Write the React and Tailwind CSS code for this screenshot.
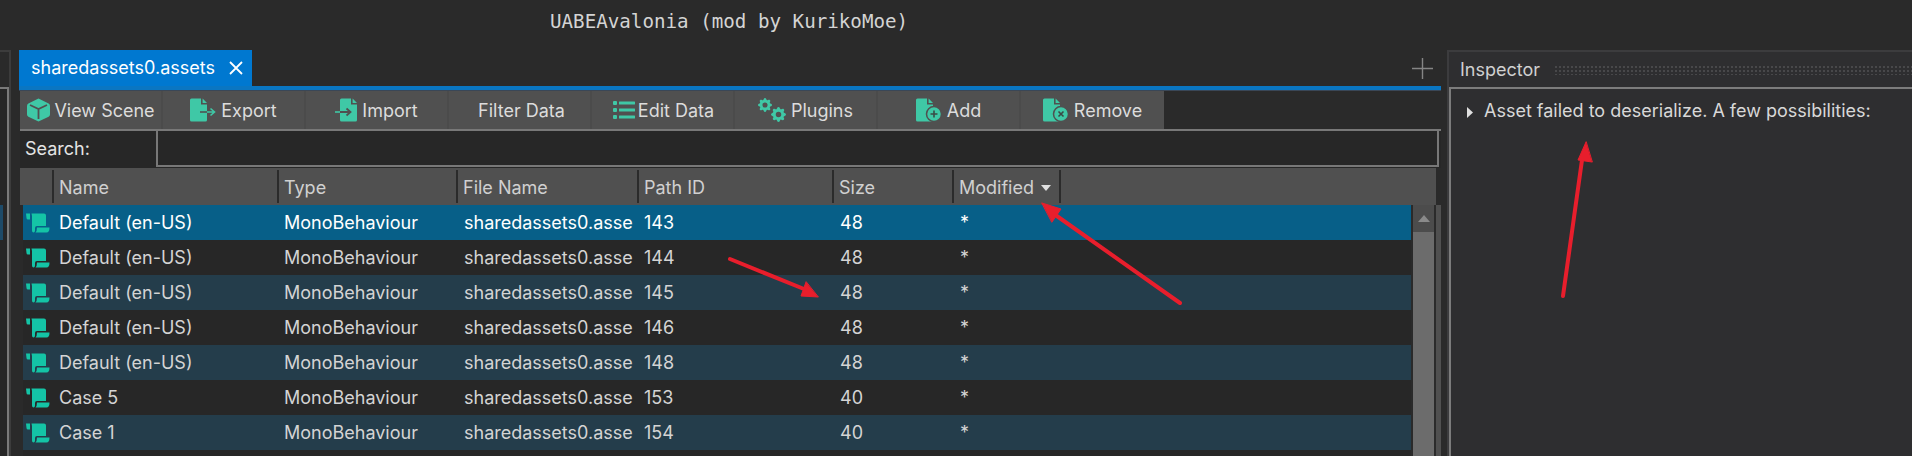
import React from "react";
import { BsGearFill } from "react-icons/bs";

const inter = "font-['Inter','Noto_Sans',sans-serif]";

const CubeIcon = () => (
  <svg width="25" height="24" viewBox="0 0 25 24">
    <path d="M12.5 0.5 22.6 5.6Q24 6.3 24 8V16.5Q24 18 22.6 18.7L12.5 23.5 2.4 18.7Q1 18 1 16.5V8Q1 6.3 2.4 5.6Z" fill="#3fc8a6" />
    <path d="M4 7 12.5 11 21 7M12.5 11V21" fill="none" stroke="#505050" strokeWidth="1.8" />
  </svg>
);

const FileShape = ({ children }) => (
  <svg width="28" height="24" viewBox="0 0 28 24">
    <path d="M1.5 0.5H11V6.5H17V22Q17 23.5 15.5 23.5H1.5Q0 23.5 0 22V2Q0 0.5 1.5 0.5ZM12.6 0.5 17 5H12.6Z" fill="#3fc8a6" />
    {children}
  </svg>
);

const ExportIcon = () => (
  <FileShape>
    <path d="M10 14H24M20.5 10.5 24.5 14 20.5 17.5" fill="none" stroke="#3fc8a6" strokeWidth="1.6" />
    <path d="M10 14H17" stroke="#505050" strokeWidth="1.6" />
  </FileShape>
);

const ImportIcon = () => (
  <svg width="24" height="24" viewBox="0 0 24 24">
    <path d="M6.5 0.5H16V6.5H22V22Q22 23.5 20.5 23.5H6.5Q5 23.5 5 22V2Q5 0.5 6.5 0.5ZM17.6 0.5 22 5H17.6Z" fill="#3fc8a6" />
    <path d="M0 14H5" stroke="#3fc8a6" strokeWidth="1.6" />
    <path d="M5 14H15M11.5 10.5 15.5 14 11.5 17.5" fill="none" stroke="#505050" strokeWidth="1.8" />
  </svg>
);

const ListIcon = () => (
  <svg width="22" height="20" viewBox="0 0 22 20" fill="#3fc8a6">
    <rect x="0" y="1" width="4" height="4" rx="1" />
    <rect x="0" y="8" width="4" height="4" rx="1" />
    <rect x="0" y="15" width="4" height="4" rx="1" />
    <rect x="6" y="1.5" width="16" height="3" rx="0.5" />
    <rect x="6" y="8.5" width="16" height="3" rx="0.5" />
    <rect x="6" y="15.5" width="16" height="3" rx="0.5" />
  </svg>
);

const GearsIcon = () => (
  <span className="relative mr-[2px] block h-[24px] w-[28px] text-[#3fc8a6]">
    <BsGearFill className="absolute left-0 top-0 text-[14px]" />
    <BsGearFill className="absolute bottom-0 right-0 text-[15px]" />
  </span>
);

const BadgeFileIcon = ({ kind }) => (
  <FileShape>
    <circle cx="18" cy="16" r="7.5" fill="#3fc8a6" stroke="#505050" strokeWidth="1.5" />
    {kind === "add" ? (
      <path d="M14.5 16H21.5M18 12.5V19.5" stroke="#3a4a46" strokeWidth="1.6" />
    ) : (
      <path d="M15.5 13.5 20.5 18.5M20.5 13.5 15.5 18.5" stroke="#3a4a46" strokeWidth="1.6" />
    )}
  </FileShape>
);

const ScrollIcon = () => (
  <svg width="24" height="20" viewBox="0 0 24 20" className="block">
    <path d="M0 0.5H4V6.5H2Q0.5 6.5 0.5 5Z" fill="#14c4a6" />
    <path d="M5.5 0.5H18Q20 0.5 20 2.5V13H11Q9 13 9 15V17.5Q9 19.5 7.5 19.5T6 17.5V3Z" fill="#14c4a6" />
    <path d="M11 14.5H23.5Q23.5 19.5 20.5 19.5H9.5Q11 18 11 14.5Z" fill="#14c4a6" />
  </svg>
);

const tools = [
  { label: "View Scene", icon: <CubeIcon /> },
  { label: "Export", icon: <ExportIcon /> },
  { label: "Import", icon: <ImportIcon /> },
  { label: "Filter Data", nudge: "pl-[4px]" },
  { label: "Edit Data", icon: <ListIcon />, nudge: "pl-[2px]" },
  { label: "Plugins", icon: <GearsIcon /> },
  { label: "Add", icon: <BadgeFileIcon kind="add" /> },
  { label: "Remove", icon: <BadgeFileIcon kind="remove" /> },
];

const rows = [
  ["Default (en-US)", "143", "48"],
  ["Default (en-US)", "144", "48"],
  ["Default (en-US)", "145", "48"],
  ["Default (en-US)", "146", "48"],
  ["Default (en-US)", "148", "48"],
  ["Case 5", "153", "40"],
  ["Case 1", "154", "40"],
];

const headers = ["", "Name", "Type", "File Name", "Path ID", "Size", "Modified", ""];

const App = () => {
  return (
    <div className={`relative flex h-[456px] w-[1912px] flex-col overflow-hidden bg-[#2a2a2a] text-[18px] text-[#d8d8d8] ${inter}`}>
      <div className="flex h-[50px] shrink-0 items-center pl-[550px]">
        <span className="pb-[6px] font-['DejaVu_Sans_Mono',monospace] text-[19.2px] text-[#d4d4d4]">
          UABEAvalonia (mod by KurikoMoe)
        </span>
      </div>

      <div className="flex min-h-0 flex-1">
        {/* left dock sliver */}
        <div className="mr-[8px] flex w-[11px] shrink-0 flex-col border-t-2 border-r-2 border-[#3c3c3c]">
          <div className="h-[35px] shrink-0" />
          <div className="flex-1 border-t-2 border-r-2 border-[#7a7a7a] bg-[#262626]">
            <div className="mt-[116px] h-[35px] w-[3px] bg-[#1d4a68]" />
          </div>
        </div>

        {/* documents */}
        <div className="flex w-[1422px] shrink-0 flex-col">
          <div className="flex h-[36px] shrink-0 items-start">
            <div className="flex h-[36px] w-[233px] items-center gap-[14px] bg-[#0078d0] pb-[2px] pl-[12px] text-white">
              <span>sharedassets0.assets</span>
              <svg width="14" height="14" viewBox="0 0 14 14" className="mt-[2px]">
                <path d="M1 1 13 13M13 1 1 13" stroke="#fff" strokeWidth="1.8" />
              </svg>
            </div>
            <div className="ml-auto mr-[8px] mt-[8px]">
              <svg width="21" height="21" viewBox="0 0 21 21">
                <path d="M10.5 0V21M0 10.5H21" stroke="#858585" strokeWidth="1.4" />
              </svg>
            </div>
          </div>
          <div className="h-[4px] shrink-0 bg-[#0a76c2]" />
          <div className="h-[1px] shrink-0 bg-[#3a4757]" />

          <div className="flex min-h-0 flex-1 flex-col pl-[1px]">
            <div className="flex h-[38px] shrink-0">
              {tools.map((tool) => (
                <div
                  key={tool.label}
                  className={`flex w-[143px] items-center justify-center gap-[3px] border-r-2 border-[#4b4b4b] bg-[#505050] text-[#dcdcdc] last:border-r-0 ${tool.nudge || ""}`}
                >
                  {tool.icon}
                  <span>{tool.label}</span>
                </div>
              ))}
            </div>

            <div className="flex h-[39px] shrink-0 border-t-2 border-[#787878] bg-[#272727]">
              <div className="flex w-[136px] shrink-0 items-center pb-[2px] pl-[5px] text-[#e4e4e4]">Search:</div>
              <div className="mb-[1px] w-[1283px] shrink-0 border-2 border-t-0 border-[#787878] bg-[#272727]" />
            </div>

            <div className="grid h-[37px] w-[1416px] shrink-0 grid-cols-[32px_225px_179px_181px_195px_120px_107px_1fr] bg-[#505050] py-[2px]">
              {headers.map((head, i) => (
                <div
                  key={i}
                  className={`flex items-center pl-[5px] pt-[1px] text-[#d0d0d0] ${i > 0 ? "border-l-2 border-[#2b2b2b]" : ""}`}
                >
                  {head}
                  {head === "Modified" && (
                    <svg width="10" height="6" viewBox="0 0 10 6" className="ml-[7px] mt-[2px]">
                      <path d="M0 0H10L5 6Z" fill="#e0e0e0" />
                    </svg>
                  )}
                </div>
              ))}
            </div>

            <div className="flex min-h-0 flex-1">
              <div className="ml-[3px] flex w-[1388px] shrink-0 flex-col bg-[#272727]">
                {rows.map(([name, path, size], i) => (
                  <div
                    key={path}
                    className={`grid h-[35px] shrink-0 grid-cols-[29px_225px_180px_180px_196px_120px_1fr] items-center ${
                      i === 0
                        ? "bg-[#075f88] text-white"
                        : i % 2 === 0
                          ? "bg-[#243d4b] text-[#d4d4d4]"
                          : "bg-[#272727] text-[#d4d4d4]"
                    }`}
                  >
                    <div className="pl-[3px]">
                      <ScrollIcon />
                    </div>
                    <div className="pl-[7px]">{name}</div>
                    <div className="pl-[7px]">MonoBehaviour</div>
                    <div className="overflow-hidden whitespace-nowrap pl-[7px]">sharedassets0.asse</div>
                    <div className="pl-[7px]">{path}</div>
                    <div className="pl-[7px]">{size}</div>
                    <div className="pl-[7px]">*</div>
                  </div>
                ))}
              </div>
              {/* scrollbar */}
              <div className="ml-[2px] flex w-[21px] shrink-0 flex-col bg-[#4c4c4c]">
                <div className="flex h-[27px] shrink-0 items-center justify-center">
                  <svg width="12" height="7" viewBox="0 0 12 7">
                    <path d="M6 0 12 7H0Z" fill="#8a8a8a" />
                  </svg>
                </div>
                <div className="flex-1 bg-[#6c6c6c]" />
              </div>
              <div className="w-[2px] shrink-0 bg-[#2b2b2b]" />
              <div className="flex-1 bg-[#505050]" />
            </div>
          </div>
        </div>

        {/* inspector */}
        <div className="ml-[6px] flex min-w-0 flex-1 flex-col border-t-2 border-l-2 border-[#3c3c3e] bg-[#2e2e30]">
          <div className="flex h-[35px] shrink-0 items-center pl-[11px]">
            <span className="text-[#d0d0d0]">Inspector</span>
            <div className="ml-[14px] h-[10px] flex-1 bg-[radial-gradient(#48484a_1px,transparent_1px)] bg-[length:4px_4px]" />
          </div>
          <div className="flex-1 border-t-2 border-l-2 border-[#7c7c7c] pl-[16px] pt-[8px]">
            <div className="flex items-center gap-[11px] text-[#d8d8d8]">
              <svg width="6" height="11" viewBox="0 0 6 11" className="mt-[3px]">
                <path d="M0 0 6 5.5 0 11Z" fill="#e0e0e0" />
              </svg>
              <span>Asset failed to deserialize. A few possibilities:</span>
            </div>
          </div>
        </div>
      </div>

      {/* red annotation arrows on top of the screenshot */}
      <svg width="1912" height="456" viewBox="0 0 1912 456" className="pointer-events-none absolute left-0 top-0">
        <g fill="#e81e2c" stroke="#e81e2c" strokeLinecap="round">
          <path d="M1563 296 1582 160" fill="none" strokeWidth="4" />
          <path d="M1586 142 1578 160 1592 162Z" strokeWidth="1" />
          <path d="M730 259 804 289" fill="none" strokeWidth="4" />
          <path d="M818 297 801 296 806 282Z" strokeWidth="1" />
          <path d="M1180 303 1054 214" fill="none" strokeWidth="4" />
          <path d="M1042 203 1061 209 1052 222Z" strokeWidth="1" />
        </g>
      </svg>
    </div>
  );
};

export default App;
